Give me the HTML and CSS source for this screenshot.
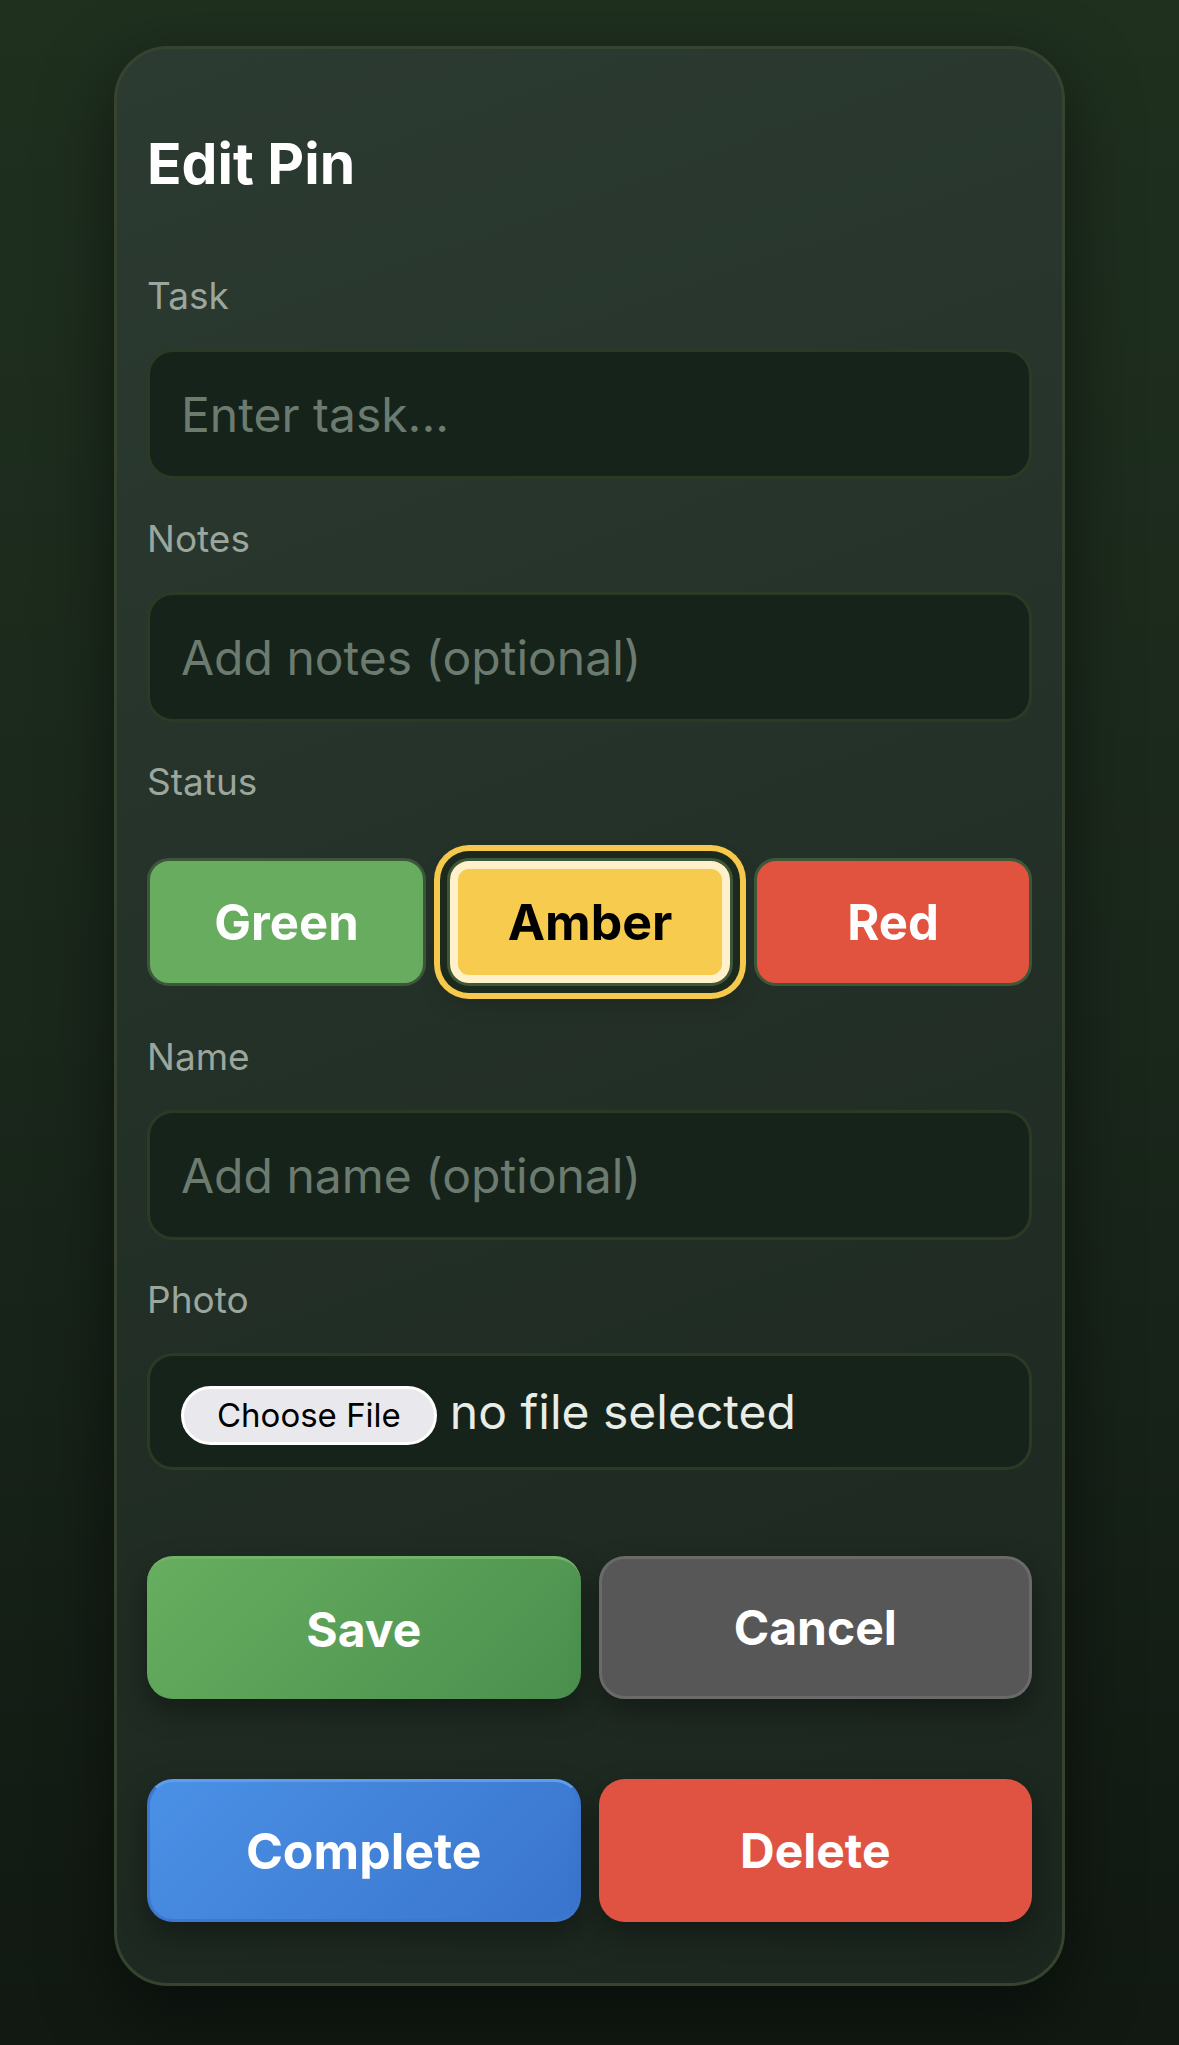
FILE: index.html
```html
<!DOCTYPE html>
<html lang="en">

<head>
    <meta charset="UTF-8">
    <meta name="viewport" content="width=device-width, initial-scale=1.0">
    <title>Edit Pin</title>
    <link rel="stylesheet" href="styles.css">
</head>

<body>

    <div class="pin-container">
        <h2>Edit Pin</h2>

        <form id="pin-form">
            <div class="form-group">
                <label for="task">Task</label>
                <input type="text" id="task" placeholder="Enter task...">
            </div>

            <div class="form-group">
                <label for="notes">Notes</label>
                <input type="text" id="notes" placeholder="Add notes (optional)">
            </div>

            <div class="form-group status-group">
                <label>Status</label>
                <div class="status-options">
                    <button type="button" class="status-btn green">Green</button>
                    <button type="button" class="status-btn amber selected">Amber</button>
                    <button type="button" class="status-btn red">Red</button>
                </div>
            </div>

            <div class="form-group">
                <label for="name">Name</label>
                <input type="text" id="name" placeholder="Add name (optional)">
            </div>

            <div class="form-group photo-group">
                <label for="photo">Photo</label>
                <div class="file-field">
                    <span class="file-btn">Choose File</span>
                    <span class="file-name">no file selected</span>
                </div>
            </div>

            <div class="button-row">
                <button type="button" class="action-btn save">Save</button>
                <button type="button" class="action-btn cancel">Cancel</button>
            </div>

            <div class="button-row last">
                <button type="button" class="action-btn complete">Complete</button>
                <button type="button" class="action-btn delete">Delete</button>
            </div>
        </form>
    </div>

</body>

</html>
```

FILE: styles.css
```css
/* Basic reset and styling */
* {
    margin: 0;
    padding: 0;
    box-sizing: border-box;
}

html {
    background: #121a13;
}

body {
    font-family: Inter, "Liberation Sans", Arial, sans-serif;
    background: linear-gradient(180deg, #1f301f 0%, #1a271b 50%, #111912 100%);
    min-height: 2045px;
    padding-top: 46px;
}

.pin-container {
    width: 951px;
    margin: 0 auto;
    padding: 82px 30px 61px;
    border: 3px solid #36432f;
    border-radius: 54px;
    background: linear-gradient(160deg, #2c3b32 0%, #243128 45%, #1b261e 100%);
    box-shadow: 0 24px 70px rgba(0, 0, 0, 0.5);
}

.pin-container h2 {
    font-size: 57px;
    line-height: 66px;
    font-weight: 700;
    color: #ffffff;
    margin-bottom: 76px;
}

.form-group {
    margin-bottom: 37px;
}

.form-group label {
    display: block;
    font-size: 37px;
    line-height: 45px;
    color: #9ba69d;
    margin-bottom: 31px;
}

.form-group input {
    display: block;
    width: 100%;
    height: 130px;
    padding: 0 31px;
    background-color: #16231a;
    border: 3px solid #2b3a25;
    border-radius: 26px;
    font-family: Inter, "Liberation Sans", Arial, sans-serif;
    font-size: 48px;
    color: #e6ebe6;
    outline: none;
}

.form-group input::placeholder {
    color: #6c7b6f;
}

/* Status selector */
.status-group {
    margin-bottom: 48px;
}

.status-options {
    display: grid;
    grid-template-columns: 279px 286px 1fr;
    gap: 21px;
    padding-top: 23px;
}

.status-btn {
    height: 128px;
    border: 3px solid #3d573b;
    border-radius: 22px;
    font-family: Inter, "Liberation Sans", Arial, sans-serif;
    font-size: 49px;
    font-weight: 700;
    color: #ffffff;
    cursor: pointer;
}

.status-btn.green {
    background-color: #68ad5f;
}

.status-btn.amber {
    background-color: #f7cb4e;
    color: #000000;
    font-size: 50px;
}

.status-btn.red {
    background-color: #e1533f;
}

.status-btn.selected {
    box-shadow: inset 0 0 0 8px #fff1cc,
        0 0 0 7px #1c2a1e,
        0 0 0 13px #f6c94c,
        0 10px 26px rgba(0, 0, 0, 0.35);
}

/* Photo field */
.photo-group {
    margin-bottom: 86px;
}

.file-field {
    display: flex;
    align-items: center;
    gap: 13px;
    height: 117px;
    padding: 0 31px;
    background-color: #16231a;
    border: 3px solid #2b3a25;
    border-radius: 26px;
}

.file-btn {
    display: flex;
    align-items: center;
    height: 59px;
    padding: 0 33px;
    margin-top: 7px;
    background-color: #e9e9ed;
    border: 3px solid #ffffff;
    border-radius: 30px;
    font-size: 33px;
    color: #000000;
}

.file-name {
    font-size: 48px;
    color: #e8ede8;
}

/* Action buttons */
.button-row {
    display: grid;
    grid-template-columns: 1fr 1fr;
    gap: 18px;
    margin-bottom: 80px;
}

.button-row.last {
    margin-bottom: 0;
}

.action-btn {
    height: 143px;
    border: none;
    border-radius: 26px;
    font-family: Inter, "Liberation Sans", Arial, sans-serif;
    font-size: 48px;
    font-weight: 700;
    color: #ffffff;
    cursor: pointer;
    box-shadow: 0 12px 28px rgba(0, 0, 0, 0.35);
}

.action-btn.save {
    background: linear-gradient(135deg, #67ae5f 0%, #4b8f4e 100%);
    border-top: 3px solid #71b468;
}

.action-btn.cancel {
    background-color: #575757;
    border: 3px solid #6a6a6a;
}

.action-btn.complete {
    background: linear-gradient(135deg, #4a91e6 0%, #3a74cc 100%);
    border: 3px solid #3c77d0;
    border-top-color: #5d9deb;
    font-size: 50px;
}

.action-btn.delete {
    background-color: #e05342;
}
```
